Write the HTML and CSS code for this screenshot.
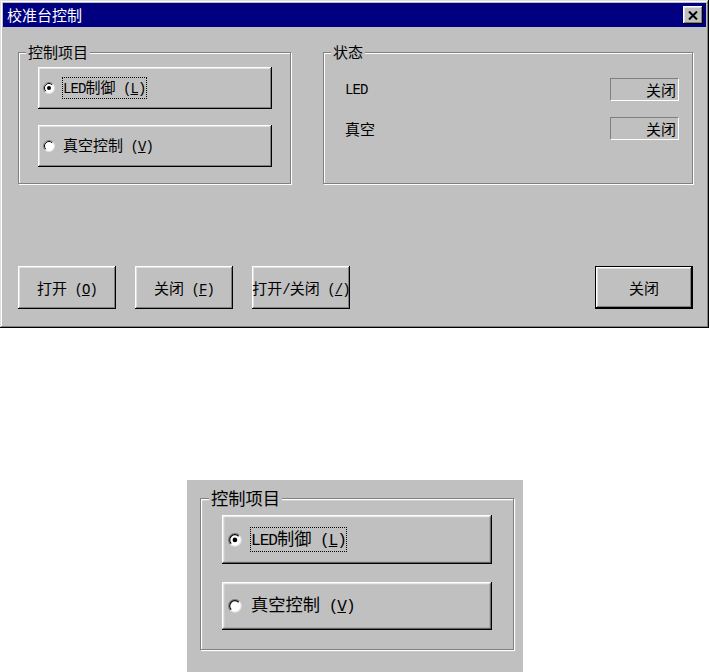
FILE: index.html
```html
<!DOCTYPE html>
<html lang="zh-CN">

<head>
    <meta charset="UTF-8">
    <title>校准台控制</title>
    <link rel="stylesheet" href="styles.css">
</head>

<body>
    <div class="dialog">
        <div class="titlebar">
            <span class="title">校准台控制</span>
            <span class="close-btn">
                <svg width="10" height="9" viewBox="0 0 10 9">
                    <path d="M1 0.5 L9 8.5 M9 0.5 L1 8.5" stroke="#000" stroke-width="2" fill="none" />
                </svg>
            </span>
        </div>

        <div class="dialog-body">
            <div class="groups">
                <div class="group group-ctrl">
                    <span class="group-title">控制项目</span>
                    <div class="radio-btn">
                        <svg width="12" height="12" viewBox="0 0 12 12">
                            <circle cx="6" cy="6" r="5.5" fill="#fff" />
                            <path d="M2.1 9.9 A5.5 5.5 0 0 1 9.9 2.1" stroke="#808080" fill="none" />
                            <path d="M2.8 9.2 A4.5 4.5 0 0 1 9.2 2.8" stroke="#000" fill="none" />
                            <path d="M9.9 2.1 A5.5 5.5 0 0 1 2.1 9.9" stroke="#dfdfdf" fill="none" />
                            <circle cx="6" cy="6" r="2" fill="#000" />
                        </svg>
                        <span class="radio-label focus"><span class="lat">LED</span>制御<span class="lat"> (<u>L</u>)</span></span>
                    </div>
                    <div class="radio-btn">
                        <svg width="12" height="12" viewBox="0 0 12 12">
                            <circle cx="6" cy="6" r="5.5" fill="#fff" />
                            <path d="M2.1 9.9 A5.5 5.5 0 0 1 9.9 2.1" stroke="#808080" fill="none" />
                            <path d="M2.8 9.2 A4.5 4.5 0 0 1 9.2 2.8" stroke="#000" fill="none" />
                            <path d="M9.9 2.1 A5.5 5.5 0 0 1 2.1 9.9" stroke="#dfdfdf" fill="none" />
                        </svg>
                        <span class="radio-label">真空控制<span class="lat"> (<u>V</u>)</span></span>
                    </div>
                </div>

                <div class="group group-status">
                    <span class="group-title">状态</span>
                    <div class="status-row">
                        <span class="lat">LED</span>
                        <span class="status-field">关闭</span>
                    </div>
                    <div class="status-row">
                        <span>真空</span>
                        <span class="status-field">关闭</span>
                    </div>
                </div>
            </div>

            <div class="actions">
                <button type="button" class="btn">打开<span class="lat"> (<u>O</u>)</span></button>
                <button type="button" class="btn">关闭<span class="lat"> (<u>F</u>)</span></button>
                <button type="button" class="btn">打开<span class="lat">/</span>关闭<span class="lat"> (<u>/</u>)</span></button>
                <button type="button" class="btn btn-default">关闭</button>
            </div>
        </div>
    </div>

    <!-- enlarged view of the control group -->
    <div class="detail">
        <div class="detail-zoom">
            <div class="group group-ctrl">
                <span class="group-title">控制项目</span>
                <div class="radio-btn">
                    <svg width="12" height="12" viewBox="0 0 12 12">
                        <circle cx="6" cy="6" r="5.5" fill="#fff" />
                        <path d="M2.1 9.9 A5.5 5.5 0 0 1 9.9 2.1" stroke="#808080" fill="none" />
                        <path d="M2.8 9.2 A4.5 4.5 0 0 1 9.2 2.8" stroke="#000" fill="none" />
                        <path d="M9.9 2.1 A5.5 5.5 0 0 1 2.1 9.9" stroke="#dfdfdf" fill="none" />
                        <circle cx="6" cy="6" r="2" fill="#000" />
                    </svg>
                    <span class="radio-label focus"><span class="lat">LED</span>制御<span class="lat"> (<u>L</u>)</span></span>
                </div>
                <div class="radio-btn">
                    <svg width="12" height="12" viewBox="0 0 12 12">
                        <circle cx="6" cy="6" r="5.5" fill="#fff" />
                        <path d="M2.1 9.9 A5.5 5.5 0 0 1 9.9 2.1" stroke="#808080" fill="none" />
                        <path d="M2.8 9.2 A4.5 4.5 0 0 1 9.2 2.8" stroke="#000" fill="none" />
                        <path d="M9.9 2.1 A5.5 5.5 0 0 1 2.1 9.9" stroke="#dfdfdf" fill="none" />
                    </svg>
                    <span class="radio-label">真空控制<span class="lat"> (<u>V</u>)</span></span>
                </div>
            </div>
        </div>
    </div>
</body>

</html>
```

FILE: styles.css
```css
body {
    margin: 0;
    background-color: #fff;
    font-family: "Noto Sans CJK SC", sans-serif;
    font-size: 15px;
    color: #000;
}

.lat {
    font-family: "Liberation Mono", monospace;
    font-size: 14px;
    letter-spacing: -0.9px;
}

.dialog {
    width: 709px;
    height: 328px;
    box-sizing: border-box;
    padding: 3px;
    display: flex;
    flex-direction: column;
    background-color: #c0c0c0;
    box-shadow: inset -1px -1px #000, inset 1px 1px #dfdfdf,
        inset -2px -2px #808080, inset 2px 2px #fff;
}

.titlebar {
    height: 24px;
    display: flex;
    align-items: center;
    justify-content: space-between;
    padding: 0 3px 0 4px;
    background-color: #000080;
    color: #fff;
}

.title {
    line-height: 24px;
}

.close-btn {
    width: 20px;
    height: 18px;
    box-sizing: border-box;
    display: flex;
    align-items: center;
    justify-content: center;
    background-color: #c0c0c0;
    box-shadow: inset -1px -1px #000, inset 1px 1px #fff,
        inset -2px -2px #808080, inset 2px 2px #dfdfdf;
}

.dialog-body {
    flex: 1;
    display: flex;
    flex-direction: column;
    justify-content: space-between;
    padding: 25px 13px 16px 15px;
}

.groups {
    display: flex;
    gap: 32px;
}

.group {
    position: relative;
    box-sizing: border-box;
    height: 132px;
    border: 1px solid #808080;
    box-shadow: 1px 1px 0 #fff, inset 1px 1px 0 #fff;
}

.group-title {
    position: absolute;
    top: -10px;
    left: 7px;
    padding: 0 2px;
    line-height: 17px;
    background-color: #c0c0c0;
}

.group-ctrl {
    width: 273px;
    padding: 14px 18px 0 19px;
    display: flex;
    flex-direction: column;
    gap: 16px;
}

.radio-btn {
    height: 42px;
    box-sizing: border-box;
    display: flex;
    align-items: center;
    gap: 7px;
    padding-left: 5px;
    background-color: #c0c0c0;
    box-shadow: inset -1px -1px #000, inset 1px 1px #fff,
        inset -2px -2px #808080, inset 2px 2px #dfdfdf;
}

.radio-label {
    border: 1px dotted transparent;
    line-height: 18px;
    white-space: nowrap;
}

.radio-label.focus {
    border-color: #000;
}

.group-status {
    flex: 1;
    padding: 25px 13px 0 21px;
    display: flex;
    flex-direction: column;
    gap: 16px;
}

.status-row {
    height: 23px;
    display: flex;
    align-items: center;
    justify-content: space-between;
}

.status-field {
    width: 69px;
    height: 23px;
    box-sizing: border-box;
    padding-right: 2px;
    border-top: 1px solid #808080;
    border-left: 1px solid #808080;
    border-bottom: 1px solid #fff;
    border-right: 1px solid #fff;
    line-height: 21px;
    text-align: right;
}

.actions {
    display: flex;
    gap: 19px;
}

.btn {
    width: 98px;
    height: 43px;
    box-sizing: border-box;
    padding: 0;
    border: none;
    background-color: #c0c0c0;
    font: inherit;
    color: #000;
    white-space: nowrap;
    overflow: hidden;
    box-shadow: inset -1px -1px #000, inset 1px 1px #fff,
        inset -2px -2px #808080, inset 2px 2px #dfdfdf;
}

.btn-default {
    margin-left: auto;
    border: 1px solid #000;
}

.detail {
    width: 336px;
    height: 192px;
    margin: 152px 0 0 187px;
    background-color: #c0c0c0;
    overflow: hidden;
}

.detail-zoom {
    zoom: 1.15;
    padding: 16px 0 0 11px;
}
```
